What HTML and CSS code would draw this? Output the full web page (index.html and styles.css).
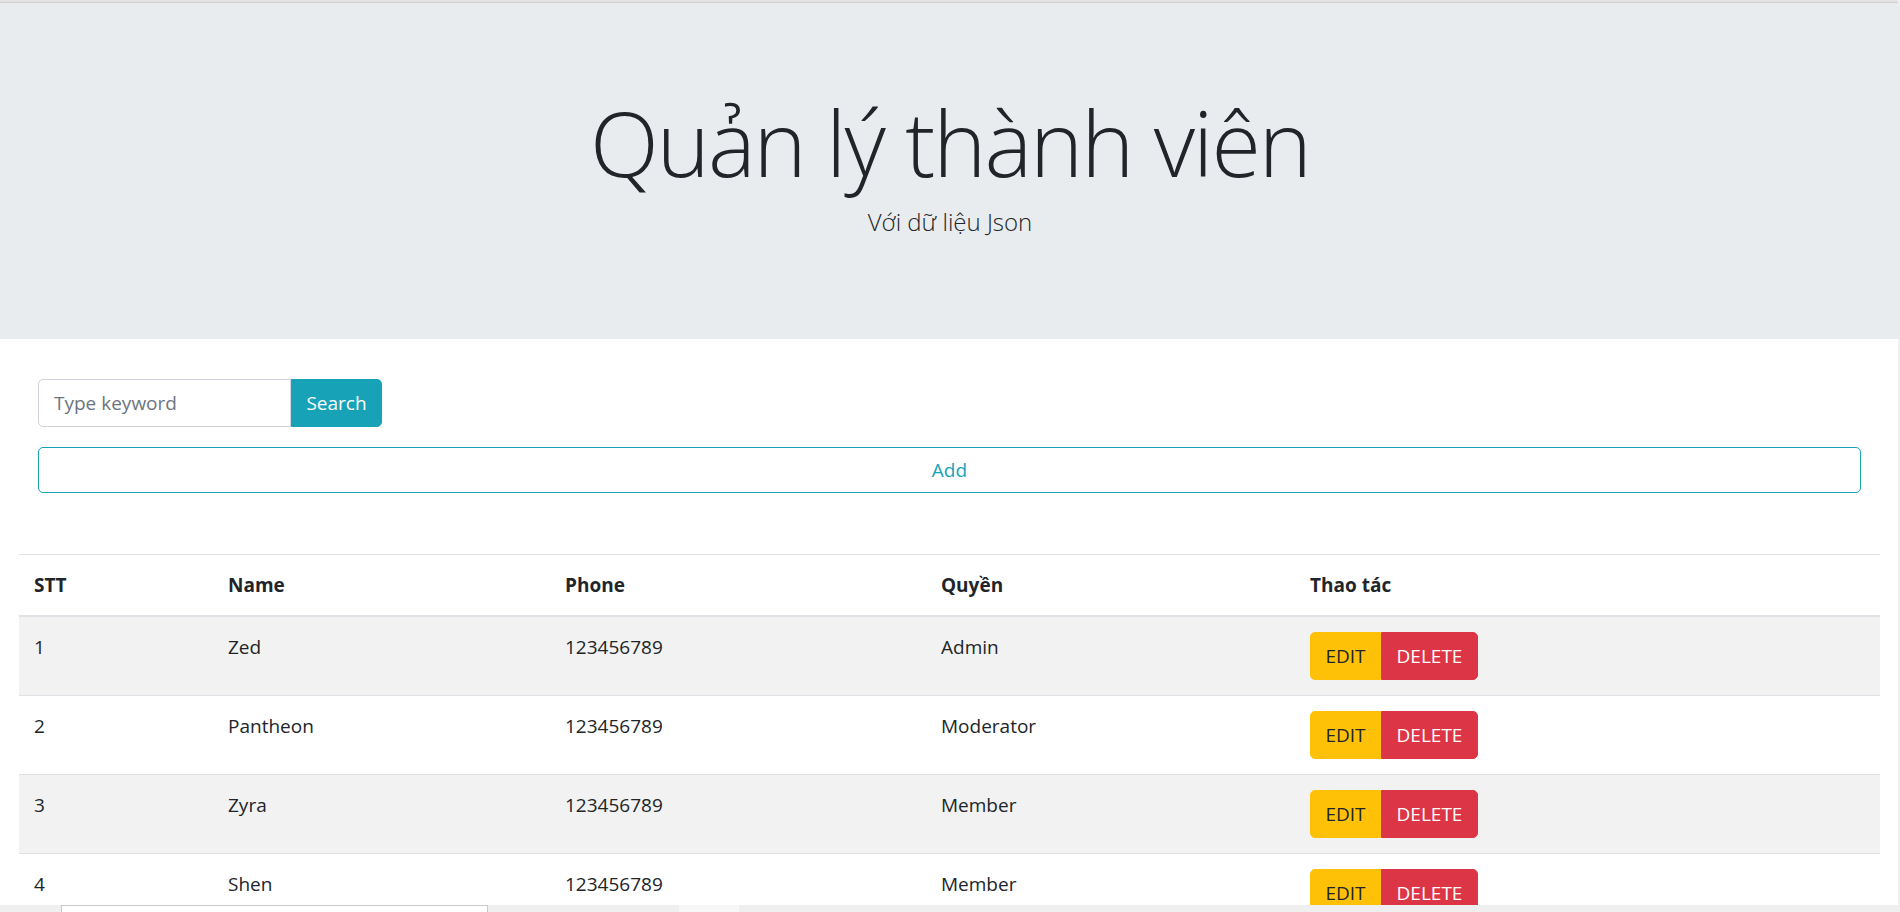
FILE: index.html
```html
<!DOCTYPE html>
<html lang="vi">
<head>
<meta charset="utf-8">
<title>Quản lý thành viên</title>
<link rel="stylesheet" href="styles.css">
</head>
<body>
<div class="page">
  <div class="topline"></div>
  <header class="jumbotron">
    <h1 class="title">Quản lý thành viên</h1>
    <p class="lead">Với dữ liệu Json</p>
  </header>

  <section class="controls">
    <div class="input-group">
      <input class="search-input" type="text" placeholder="Type keyword">
      <button class="btn btn-info" type="button">Search</button>
    </div>
    <button class="btn btn-outline-info btn-block" type="button">Add</button>
  </section>

  <section class="table-wrap">
    <table class="table">
      <colgroup>
        <col class="c1"><col class="c2"><col class="c3"><col class="c4"><col class="c5">
      </colgroup>
      <thead>
        <tr><th>STT</th><th>Name</th><th>Phone</th><th>Quyền</th><th>Thao tác</th></tr>
      </thead>
      <tbody>
        <tr><td>1</td><td>Zed</td><td>123456789</td><td>Admin</td>
          <td><div class="btn-group"><button class="btn btn-warning">EDIT</button><button class="btn btn-danger">DELETE</button></div></td></tr>
        <tr><td>2</td><td>Pantheon</td><td>123456789</td><td>Moderator</td>
          <td><div class="btn-group"><button class="btn btn-warning">EDIT</button><button class="btn btn-danger">DELETE</button></div></td></tr>
        <tr><td>3</td><td>Zyra</td><td>123456789</td><td>Member</td>
          <td><div class="btn-group"><button class="btn btn-warning">EDIT</button><button class="btn btn-danger">DELETE</button></div></td></tr>
        <tr><td>4</td><td>Shen</td><td>123456789</td><td>Member</td>
          <td><div class="btn-group"><button class="btn btn-warning">EDIT</button><button class="btn btn-danger">DELETE</button></div></td></tr>
      </tbody>
    </table>
  </section>
</div>
<div class="bottombar">
  <div class="bar-field"></div>
  <div class="bar-light"></div>
</div>
</body>
</html>
```

FILE: styles.css
```css
html, body {
  margin: 0;
  padding: 0;
  overflow: hidden;
  height: 912px;
}
body {
  font-family: "Open Sans", "Noto Sans", "Liberation Sans", sans-serif;
  font-size: 19px;
  line-height: 30px;
  color: #212529;
  background: #ffffff;
}
.page {
  width: 1898px;
  border-right: 2px solid #f1f1f1;
  box-sizing: content-box;
}
.topline {
  height: 2px;
  background: #e4e4e4;
  border-bottom: 1px solid #cfcfcf;
}
.jumbotron {
  background: #e9ecef;
  height: 336px;
  box-sizing: border-box;
  padding-top: 87px;
  display: flex;
  flex-direction: column;
  align-items: center;
  margin-right: -2px;
}
.title {
  margin: 0;
  font-size: 90px;
  font-weight: 300;
  line-height: 104px;
  letter-spacing: -2px;
}
.lead {
  margin: 9px 0 0;
  font-size: 24px;
  font-weight: 300;
  line-height: 37px;
}
.controls {
  padding: 40px 37px 0 38px;
  display: flex;
  flex-direction: column;
  gap: 20px;
}
.input-group {
  display: flex;
  height: 48px;
}
.search-input {
  width: 253px;
  height: 48px;
  box-sizing: border-box;
  border: 1px solid #ced4da;
  border-radius: 5px 0 0 5px;
  padding: 0 15px;
  font: inherit;
  color: #495057;
  outline: none;
}
.search-input::placeholder {
  color: #6c757d;
}
.btn {
  font: inherit;
  line-height: 30px;
  border: 1px solid transparent;
  padding: 8px 15px;
  cursor: pointer;
  box-sizing: border-box;
  height: 48px;
}
.btn-info {
  width: 91px;
  padding: 0;
  background: #17a2b8;
  border-color: #17a2b8;
  color: #ffffff;
  border-radius: 0 5px 5px 0;
}
.btn-outline-info {
  width: 100%;
  height: 46px;
  padding: 0;
  background: #ffffff;
  border-color: #17a2b8;
  color: #17a2b8;
  border-radius: 5px;
}
.table-wrap {
  padding: 61px 20px 0 19px;
}
.table {
  width: 1861px;
  border-collapse: collapse;
  table-layout: fixed;
}
.c1 { width: 194px; }
.c2 { width: 337px; }
.c3 { width: 376px; }
.c4 { width: 369px; }
.c5 { width: 585px; }
.table th,
.table td {
  text-align: left;
  vertical-align: top;
  padding: 15px;
  border-top: 1px solid #dee2e6;
}
.table th {
  font-weight: 700;
  border-bottom: 2px solid #dee2e6;
}
.table td {
  height: 48px;
}
.table tbody tr:nth-child(odd) {
  background: #f2f2f2;
}
.btn-group {
  display: flex;
}
.btn-warning {
  background: #ffc107;
  border-color: #ffc107;
  color: #212529;
  border-radius: 5px 0 0 5px;
  width: 71px;
  padding: 0;
}
.btn-danger {
  background: #dc3545;
  border-color: #dc3545;
  color: #ffffff;
  border-radius: 0 5px 5px 0;
  width: 97px;
  padding: 0;
}
.bottombar {
  position: fixed;
  left: 0;
  right: 0;
  bottom: 0;
  height: 7px;
  background: #efefef;
}
.bar-field {
  position: absolute;
  left: 61px;
  top: 0;
  width: 427px;
  height: 7px;
  box-sizing: border-box;
  background: #ffffff;
  border: 1px solid #c9c9c9;
  border-bottom: none;
}
.bar-light {
  position: absolute;
  left: 679px;
  top: 0;
  width: 60px;
  height: 7px;
  background: #f7f7f7;
}
```
